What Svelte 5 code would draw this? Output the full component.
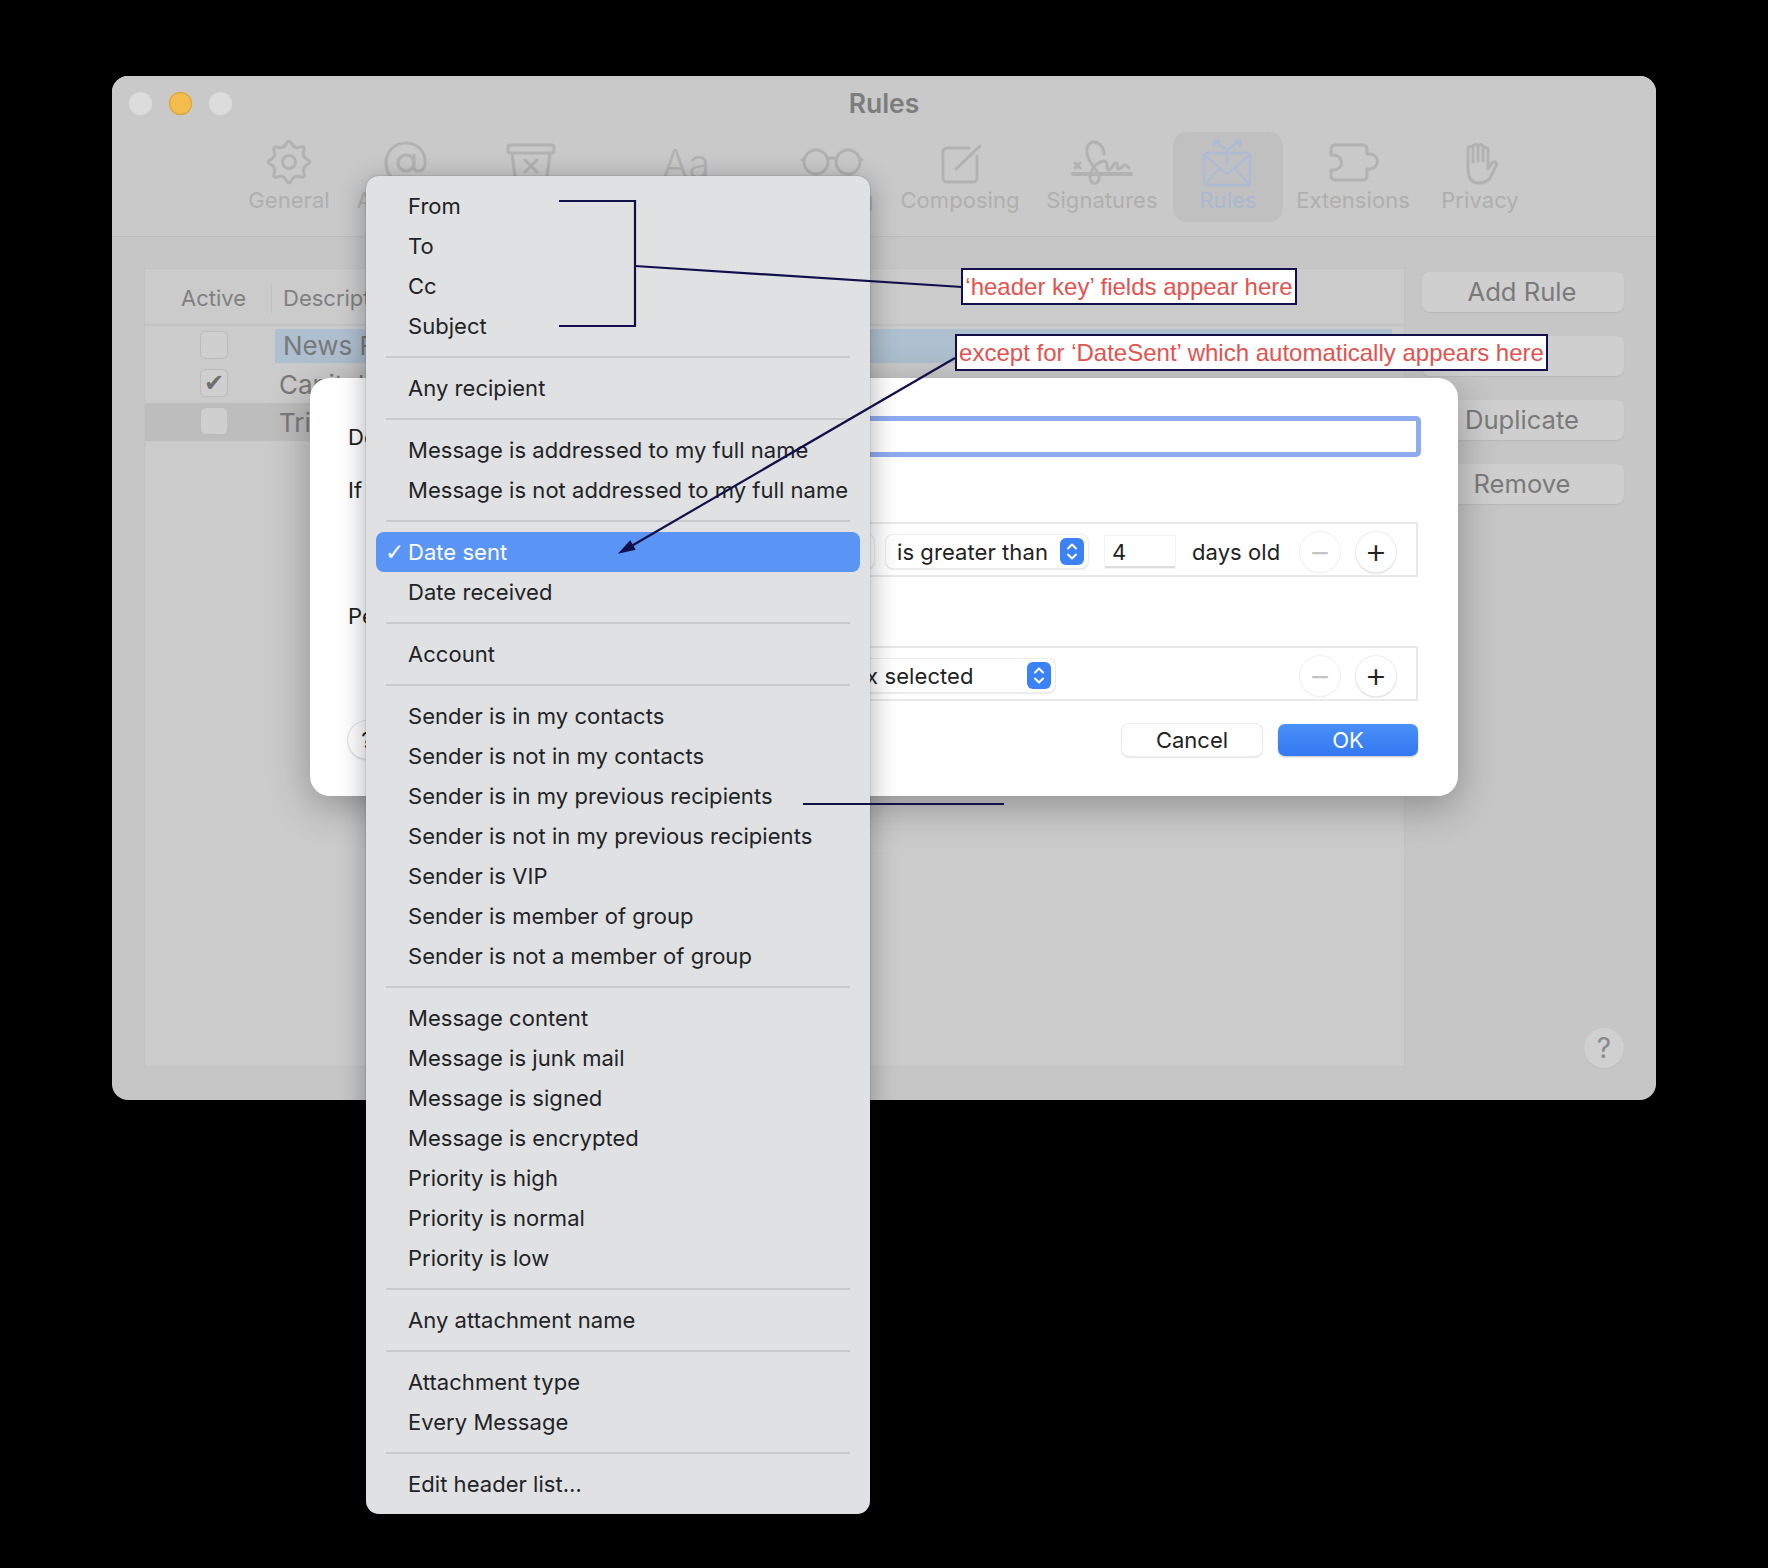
<script>
	// menu entries, one array per separated group
	const groups = [
		["From", "To", "Cc", "Subject"],
		["Any recipient"],
		["Message is addressed to my full name", "Message is not addressed to my full name"],
		["Date sent", "Date received"],
		["Account"],
		[
			"Sender is in my contacts",
			"Sender is not in my contacts",
			"Sender is in my previous recipients",
			"Sender is not in my previous recipients",
			"Sender is VIP",
			"Sender is member of group",
			"Sender is not a member of group"
		],
		[
			"Message content",
			"Message is junk mail",
			"Message is signed",
			"Message is encrypted",
			"Priority is high",
			"Priority is normal",
			"Priority is low"
		],
		["Any attachment name"],
		["Attachment type", "Every Message"],
		["Edit header list…"]
	];

	const sideButtons = ["Add Rule", "Edit", "Duplicate", "Remove"];

	// cog outline: quadratic curves through midpoints of alternating radii
	function cogPath(cx, cy, outer, inner, lobes) {
		const n = lobes * 2;
		const pts = [];
		for (let i = 0; i < n; i++) {
			const a = (i / n) * Math.PI * 2 - Math.PI / 2;
			const r = i % 2 ? inner : outer;
			pts.push([cx + r * Math.cos(a), cy + r * Math.sin(a)]);
		}
		const mid = (p, q) => [(p[0] + q[0]) / 2, (p[1] + q[1]) / 2];
		const start = mid(pts[n - 1], pts[0]);
		let d = `M${start[0].toFixed(1)} ${start[1].toFixed(1)}`;
		for (let i = 0; i < n; i++) {
			const m = mid(pts[i], pts[(i + 1) % n]);
			d += ` Q${pts[i][0].toFixed(1)} ${pts[i][1].toFixed(1)} ${m[0].toFixed(1)} ${m[1].toFixed(1)}`;
		}
		return d + " Z";
	}
	const cog = cogPath(30, 22, 23.5, 14, 8);
</script>

{#snippet stepper()}
	<svg class="stepper" viewBox="0 0 24 27" width="24" height="27">
		<rect width="24" height="27" rx="6" fill="#3b82f6" />
		<path d="M8 10.5 L12 6.5 L16 10.5 M8 16.5 L12 20.5 L16 16.5" fill="none" stroke="#fff" stroke-width="2" stroke-linecap="round" stroke-linejoin="round" />
	</svg>
{/snippet}

{#snippet addRemove()}
	<div class="round-pair">
		<span class="round off">−</span>
		<span class="round">+</span>
	</div>
{/snippet}

<div class="page">
	<!-- preferences window, dimmed behind the sheet -->
	<section class="window">
		<header class="top">
			<div class="titlebar">
				<div class="lights">
					<span class="light"></span>
					<span class="light yellow"></span>
					<span class="light"></span>
				</div>
				<h1>Rules</h1>
			</div>
			<nav class="toolbar">
				<div class="tool">
					<svg class="ico" viewBox="0 0 60 48"><path d={cog} /><circle cx="30" cy="22" r="6.5" /></svg>
					<span>General</span>
				</div>
				<div class="tool">
					<svg class="ico" viewBox="0 0 60 48">
						<circle cx="30" cy="23" r="8" />
						<path d="M38 15 V27 C38 33 48 33 49 24 C50 11 41 3 30 3 C18 3 10 12 10 23 C10 35 19 43 30 43 C35 43 39 42 42 40" />
					</svg>
					<span>Accounts</span>
				</div>
				<div class="tool">
					<svg class="ico" viewBox="0 0 60 48">
						<rect x="7" y="5" width="46" height="8" rx="2.5" />
						<path d="M11 13 L15 45 H45 L49 13 M24 20 L36 32 M36 20 L24 32" />
					</svg>
					<span>Junk</span>
				</div>
				<div class="tool">
					<div class="aa">Aa</div>
					<span>Fonts &amp; Colors</span>
				</div>
				<div class="tool">
					<svg class="ico" viewBox="0 0 60 48">
						<circle cx="14" cy="22" r="12" /><circle cx="46" cy="22" r="12" />
						<path d="M26 20 C28 17 32 17 34 20 M2 20 H0 M58 20 H60" />
					</svg>
					<span>Viewing</span>
				</div>
				<div class="tool">
					<svg class="ico" viewBox="0 0 60 48">
						<path d="M39 8 H17 a4 4 0 0 0 -4 4 V38 a4 4 0 0 0 4 4 H43 a4 4 0 0 0 4 -4 V16" />
						<path d="M26 29 L50 6" />
					</svg>
					<span>Composing</span>
				</div>
				<div class="tool">
					<svg class="ico" viewBox="0 0 60 48">
						<path class="thick" d="M1 34 H59" />
						<path d="M3 23 L8 28 M8 23 L3 28" />
						<path d="M32 14 C32 6 26 2 22 2 C16 2 14 8 15 14 C17 24 26 30 27 36 C28 42 24 44 21 43 C17 41 17 34 21 28 C25 22 32 20 34 22 C36 24 34 30 37 30 C40 30 41 22 44 23 C47 24 44 30 47 29 C50 28 52 24 54 25 L57 28" />
					</svg>
					<span>Signatures</span>
				</div>
				<div class="tool active">
					<svg class="ico" viewBox="0 0 60 48">
						<rect x="6" y="13" width="46" height="32" rx="3" />
						<path d="M6 15 L29 34 L52 15 M7 44 L22 28 M51 44 L36 28" />
						<path d="M29 24 V10 L16 1 M29 10 L42 1 M16 6 V1 H21 M42 6 V1 H37" />
					</svg>
					<span>Rules</span>
				</div>
				<div class="tool">
					<svg class="ico" viewBox="0 0 60 48">
						<path d="M8 15 V9 a4 4 0 0 1 4 -4 H40 a4 4 0 0 1 4 4 V14 h3 a7.5 7.5 0 0 1 0 15 h-3 V36 a4 4 0 0 1 -4 4 H12 a4 4 0 0 1 -4 -4 V30 h3 a7.5 7.5 0 0 0 0 -15 Z" />
					</svg>
					<span>Extensions</span>
				</div>
				<div class="tool">
					<svg class="ico" viewBox="0 0 60 48">
						<path d="M18 28 V9 a2.5 2.5 0 0 1 5 0 V22 M23 7 a2.5 2.5 0 0 1 5 0 V21 M28 7 a2.5 2.5 0 0 1 5 0 V21 M33 10 a2.5 2.5 0 0 1 5 0 V29 l4 -6 a2.5 2.5 0 0 1 4 3 L40 38 C37 42 33 43 29 43 C22 43 18 38 18 28" />
					</svg>
					<span>Privacy</span>
				</div>
			</nav>
		</header>

		<div class="body">
			<div class="table">
				<div class="thead">
					<span class="col-active">Active</span>
					<span class="col-desc">Description</span>
				</div>
				<div class="row">
					<span class="box-cell"><span class="check"></span></span>
					<span class="name selected">News Feed</span>
				</div>
				<div class="row">
					<span class="box-cell"><span class="check">✔</span></span>
					<span class="name">Capital</span>
				</div>
				<div class="row grey">
					<span class="box-cell"><span class="check"></span></span>
					<span class="name">Trip</span>
				</div>
			</div>
			<aside class="side">
				{#each sideButtons as label}
					<button class="side-btn">{label}</button>
				{/each}
				<span class="help">?</span>
			</aside>
		</div>
	</section>

	<!-- rule editing sheet -->
	<section class="sheet">
		<div class="field-row">
			<span class="label">Description:</span>
			<div class="ring"></div>
		</div>
		<p class="label if-line">If any of the following conditions are met:</p>
		<div class="cond">
			<div class="select first"><span>Date sent</span></div>
			<div class="select greater"><span>is greater than</span>{@render stepper()}</div>
			<div class="num">4</div>
			<span class="txt">days old</span>
			{@render addRemove()}
		</div>
		<p class="label perform">Perform the following actions:</p>
		<div class="cond">
			<div class="select action"><span>Move Message</span></div>
			<div class="select mailbox"><span>No mailbox selected</span>{@render stepper()}</div>
			{@render addRemove()}
		</div>
		<div class="foot">
			<span class="sheet-help">?</span>
			<button class="btn">Cancel</button>
			<button class="btn primary">OK</button>
		</div>
	</section>

	<!-- the popup list -->
	<section class="menu">
		{#each groups as group, i}
			{#if i > 0}<div class="sep"></div>{/if}
			{#each group as item}
				<div class="item" class:hot={item === "Date sent"}>
					{#if item === "Date sent"}<span class="tick">✓</span>{/if}{item}
				</div>
			{/each}
		{/each}
	</section>

	<!-- hand drawn annotations on top of the screenshot -->
	<svg class="notes" viewBox="0 0 1768 1568" width="1768" height="1568">
		<path d="M559 201 H635 V326 H559" />
		<path d="M635 266 L962 287" />
		<path d="M955 358 L628 548" />
		<path d="M621 552 L634 549 L630 542 Z" class="head" />
		<path d="M803 804 H1004" />
	</svg>
	<div class="note one">‘header key’ fields appear here</div>
	<div class="note two">except for ‘DateSent’ which automatically appears here</div>
</div>

<style>
	:global(body) {
		margin: 0;
		background: #000;
	}

	.page {
		position: relative;
		width: 1768px;
		height: 1568px;
		overflow: hidden;
		background: #000;
		font-family: Inter, "Liberation Sans", sans-serif;
	}

	/* window */
	.window {
		position: absolute;
		left: 112px;
		top: 76px;
		width: 1544px;
		height: 1024px;
		border-radius: 16px;
		background: #c6c6c6;
		display: flex;
		flex-direction: column;
		overflow: hidden;
	}

	.top {
		height: 160px;
		background: #c9c9c9;
		border-bottom: 1px solid #bcbcbc;
	}

	.titlebar {
		height: 56px;
		position: relative;
		display: flex;
		justify-content: center;
	}

	h1 {
		margin: 13px 0 0;
		font-size: 26.5px;
		line-height: 28px;
		font-weight: 600;
		color: #7d7d7d;
	}

	.lights {
		position: absolute;
		left: 17px;
		top: 16px;
		display: flex;
		gap: 17px;
	}

	.light {
		width: 23px;
		height: 23px;
		border-radius: 50%;
		background: #dcdcdc;
	}

	.light.yellow {
		background: #f3bd4e;
		box-shadow: inset 0 0 0 1px #d9a23c;
	}

	.toolbar {
		display: grid;
		grid-template-columns: 100px 134px 116px 194px 98px 158px 126px 126px 124px 130px;
		padding-left: 127px;
	}

	.tool {
		display: flex;
		flex-direction: column;
		align-items: center;
		padding-top: 8px;
		height: 90px;
		box-sizing: border-box;
		font-size: 22px;
		line-height: 25px;
		letter-spacing: 0.05px;
		color: #afafaf;
		white-space: nowrap;
	}

	.tool.active {
		width: 110px;
		justify-self: center;
		background: #c0c0c0;
		border-radius: 14px;
		color: #a9b8d0;
	}

	.ico {
		width: 60px;
		height: 48px;
		overflow: visible;
		fill: none;
		stroke: #b2b2b2;
		stroke-width: 3;
		stroke-linecap: round;
		stroke-linejoin: round;
	}

	.active .ico {
		stroke: #adbcd4;
		stroke-width: 2.5;
	}

	.ico .thick {
		stroke-width: 4;
	}

	.aa {
		height: 48px;
		font-size: 39px;
		line-height: 48px;
		font-weight: 300;
		color: #b2b2b2;
	}

	.body {
		flex: 1;
		display: flex;
		padding: 32px 32px 34px 33px;
		gap: 18px;
	}

	.table {
		width: 1259px;
		background: #cbcbcb;
		box-shadow: 0 0 0 1px #c2c2c2;
		display: flex;
		flex-direction: column;
		color: #797979;
	}

	.thead {
		height: 57px;
		border-bottom: 2px solid #c2c2c2;
		display: flex;
		align-items: center;
		font-size: 22px;
		color: #808080;
		margin-bottom: 1px;
		padding-top: 2px;
		box-sizing: border-box;
	}

	.col-active {
		width: 127px;
		box-sizing: border-box;
		padding-left: 36px;
		height: 30px;
		line-height: 30px;
		border-right: 1px solid #c0c0c0;
	}

	.col-desc {
		padding-left: 11px;
	}

	.row {
		height: 38px;
		display: flex;
		align-items: center;
		font-size: 26px;
		white-space: nowrap;
	}

	.row.grey {
		background: #bdbdbd;
	}

	.box-cell {
		width: 134px;
		box-sizing: border-box;
		padding-left: 55px;
	}

	.check {
		display: flex;
		align-items: center;
		justify-content: center;
		width: 28px;
		height: 28px;
		margin-top: -2px;
		box-sizing: border-box;
		border: 1px solid #bbb;
		border-radius: 6px;
		background: #cfcfcf;
		font-size: 24px;
		line-height: 26px;
		color: #6f6f6f;
		font-family: "DejaVu Sans", sans-serif;
	}

	.name.selected {
		flex: 1;
		height: 34px;
		line-height: 34px;
		margin: 0 12px 0 -4px;
		padding-left: 8px;
		background: #aebfcf;
	}

	.side {
		flex: 1;
		display: flex;
		flex-direction: column;
		align-items: stretch;
		gap: 24px;
		position: relative;
		margin-top: 3px;
	}

	.side-btn {
		height: 40px;
		border: none;
		border-radius: 8px;
		background: #cfcfcf;
		box-shadow: 0 1px 1px #b8b8b8;
		font: 400 25.6px Inter, sans-serif;
		color: #7a7a7a;
		padding: 0 2px 2px 0;
	}

	.help {
		position: absolute;
		right: 0;
		bottom: -2px;
		width: 40px;
		height: 40px;
		border-radius: 50%;
		background: #d0d0d0;
		box-shadow: 0 1px 1px #bbb;
		text-align: center;
		line-height: 40px;
		font-size: 28px;
		color: #8a8a8a;
	}

	/* sheet */
	.sheet {
		position: absolute;
		left: 310px;
		top: 378px;
		width: 1148px;
		height: 418px;
		box-sizing: border-box;
		padding: 38px 40px 0 38px;
		background: #fff;
		border-radius: 20px;
		box-shadow: 0 10px 40px rgba(0, 0, 0, 0.3);
		display: flex;
		flex-direction: column;
		font-size: 22px;
		letter-spacing: 0.08px;
		color: #222;
	}

	.label {
		margin: 0;
		line-height: 26px;
		white-space: nowrap;
	}

	.field-row {
		display: flex;
		align-items: center;
		gap: 12px;
		height: 41px;
	}

	.ring {
		flex: 1;
		height: 41px;
		box-sizing: border-box;
		margin-right: -3px;
		border: 5px solid #8fabf0;
		border-radius: 5px;
		background: #fff;
	}

	.if-line {
		margin-top: 20px;
	}

	.perform {
		margin-top: 26px;
	}

	/* starts under the popup, nothing of it shows on the left */
	.cond {
		margin: 19px 0 0 52px;
		height: 55px;
		box-sizing: border-box;
		border: 2px solid #e8e8e8;
		display: flex;
		align-items: center;
		padding: 4px 20px 0 12px;
	}

	.perform + .cond {
		margin-top: 17px;
	}

	.select {
		height: 33px;
		box-sizing: border-box;
		display: flex;
		align-items: center;
		justify-content: space-between;
		padding: 0 4px 0 11px;
		background: #fff;
		border-radius: 7px;
		box-shadow: 0 0 0 1px #ececec, 0 1px 2px rgba(0, 0, 0, 0.28);
		white-space: nowrap;
		flex: none;
	}

	.select.first {
		width: 460px;
		margin-right: 12px;
	}

	.select.greater {
		width: 202px;
		margin-right: 17px;
	}

	.select.action {
		width: 324px;
		margin-right: 12px;
	}

	.select.mailbox {
		width: 305px;
	}

	.stepper {
		flex: none;
	}

	.num {
		width: 70px;
		height: 32px;
		box-sizing: border-box;
		padding-left: 7px;
		line-height: 33px;
		border-bottom: 2px solid #ddd;
		box-shadow: 0 0 0 1px #f2f2f2;
		margin-right: 17px;
	}

	.round-pair {
		margin-left: auto;
		display: flex;
		gap: 16px;
	}

	.round {
		width: 40px;
		height: 40px;
		border-radius: 50%;
		background: #fff;
		box-shadow: 0 0 0 1px #ececec, 0 1px 2px rgba(0, 0, 0, 0.3);
		text-align: center;
		line-height: 37px;
		font-size: 35px;
		font-weight: 300;
		color: #222;
	}

	.round.off {
		color: #c4c4c4;
		box-shadow: 0 0 0 1px #f0f0f0, 0 1px 1px rgba(0, 0, 0, 0.1);
	}

	.foot {
		margin-top: 23px;
		height: 32px;
		display: flex;
		align-items: center;
		gap: 16px;
	}

	.sheet-help {
		width: 38px;
		height: 38px;
		border-radius: 50%;
		box-shadow: 0 0 0 1px #e6e6e6, 0 1px 2px rgba(0, 0, 0, 0.25);
		text-align: center;
		line-height: 38px;
		margin-right: auto;
	}

	.btn {
		width: 140px;
		height: 32px;
		border: none;
		border-radius: 7px;
		padding: 0;
		background: #fff;
		box-shadow: 0 0 0 1px #ececec, 0 1px 2px rgba(0, 0, 0, 0.3);
		font: 400 22px Inter, sans-serif;
		color: #222;
	}

	.btn.primary {
		background: linear-gradient(#4a90f8, #3478f1);
		box-shadow: 0 1px 2px rgba(0, 0, 0, 0.25);
		color: #fff;
	}

	/* popup list */
	.menu {
		position: absolute;
		left: 366px;
		top: 176px;
		width: 504px;
		height: 1338px;
		box-sizing: border-box;
		padding: 10px;
		background: #e0e1e3;
		border-radius: 13px;
		box-shadow: 0 0 0 1px rgba(0, 0, 0, 0.08), 0 6px 28px rgba(0, 0, 0, 0.32);
		font-size: 22px;
		letter-spacing: 0.04px;
		color: #222326;
	}

	.item {
		height: 40px;
		line-height: 40px;
		padding-left: 32px;
		white-space: nowrap;
	}

	.item.hot {
		background: #5a94f5;
		border-radius: 8px;
		color: #fff;
	}

	.tick {
		display: inline-block;
		width: 23px;
		margin-left: -23px;
		font-family: "DejaVu Sans", sans-serif;
		font-weight: 700;
		font-size: 23px;
	}

	.sep {
		height: 2px;
		margin: 10px;
		background: #c9cacd;
	}

	/* annotations */
	.notes {
		position: absolute;
		left: 0;
		top: 0;
		fill: none;
		stroke: #12104a;
		stroke-width: 2.2;
		pointer-events: none;
	}

	.notes .head {
		fill: #12104a;
	}

	.note {
		position: absolute;
		box-sizing: border-box;
		background: #fff;
		border: 2.5px solid #12104a;
		color: #e2534f;
		font-family: "Liberation Sans", Arial, sans-serif;
		font-size: 24px;
		white-space: nowrap;
		display: flex;
		align-items: center;
		justify-content: center;
	}

	.note.one {
		left: 961px;
		top: 268px;
		width: 336px;
		height: 37px;
	}

	.note.two {
		left: 955px;
		top: 334px;
		width: 593px;
		height: 37px;
	}
</style>
